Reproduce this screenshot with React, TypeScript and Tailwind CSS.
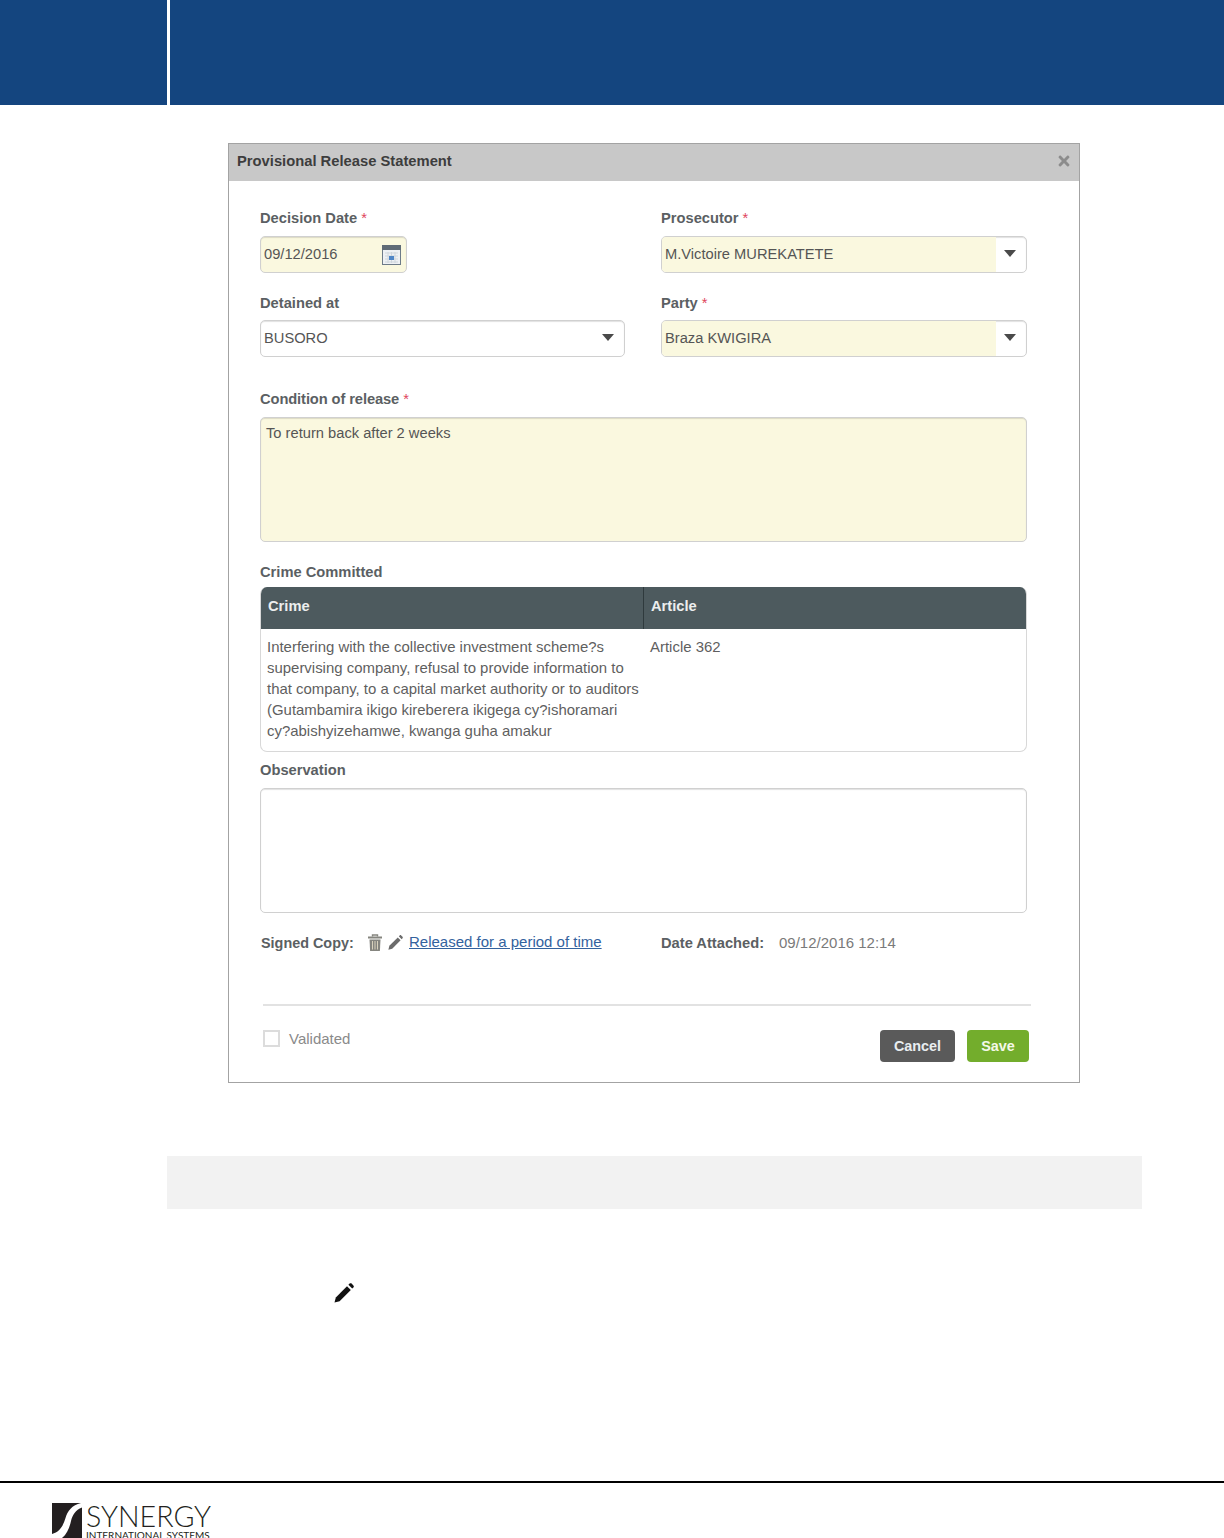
import { FaTimes } from 'react-icons/fa'
import type { ReactNode } from 'react'

const inputBorder = 'rounded-[5px] border border-[#d0d0d0] shadow-[inset_0_1px_1px_rgba(0,0,0,0.12)]'

function Label({ children, required, className }: { children: ReactNode; required?: boolean; className?: string }) {
  return (
    <div className={`h-5 text-[14.7px] leading-5 font-bold text-[#5b5f63] ${className ?? ''}`}>
      {children}
      {required && <span className="ml-1 font-normal text-[#e0455c]">*</span>}
    </div>
  )
}

function Caret() {
  return <span className="h-0 w-0 border-x-[6px] border-t-[7px] border-x-transparent border-t-[#4a4a4a]" />
}

function SelectBox({ value, highlight }: { value: string; highlight?: boolean }) {
  return (
    <div className={`flex h-[37px] overflow-hidden bg-white text-[14.7px] text-[#555] ${inputBorder}`}>
      <div className={`flex flex-1 items-center pl-[3px] ${highlight ? 'bg-[#faf8df]' : ''}`}>{value}</div>
      <div className="flex w-[30px] items-center justify-center pb-[3px] pr-[3px]">
        <Caret />
      </div>
    </div>
  )
}

function CalendarIcon() {
  return (
    <svg width="19" height="20" viewBox="0 0 19 20">
      <rect x="0.5" y="0.5" width="18" height="19" fill="#eef1f4" stroke="#6d7b88" />
      <rect x="0" y="0" width="19" height="5" fill="#5f6b76" />
      <path d="M3 8h13M3 11h13M3 14h13M3 17h13M6 7v11M9.5 7v11M13 7v11" stroke="#cfd6dc" strokeWidth="1" />
      <rect x="7" y="11" width="5" height="4" fill="#4f86c6" />
    </svg>
  )
}

function TrashIcon() {
  return (
    <svg width="14" height="17" viewBox="0 0 14 17" className="mb-[2px] shrink-0">
      <path d="M4.5 2.5V1h5v1.5" fill="none" stroke="#85857f" strokeWidth="1.4" />
      <rect x="0" y="2.5" width="14" height="2" fill="#85857f" />
      <path d="M1.5 5.5h11l-.6 11.5H2.1Z" fill="#85857f" />
      <path d="M4.5 7v8.5M7 7v8.5M9.5 7v8.5" stroke="#d9d2bd" strokeWidth="1" />
    </svg>
  )
}

// tip bottom-left, body, small gap, eraser top-right
function PencilIcon({ size, color, className }: { size: number; color: string; className?: string }) {
  return (
    <svg width={size} height={size} viewBox="0 0 20 20" className={`shrink-0 ${className ?? ''}`}>
      <path d="M0.5 19.5L1.8 14.4L13 3.2L16.8 7L5.6 18.2Z" fill={color} />
      <path d="M14.4 1.8L15.6 0.6C16.2 0 17 0 17.6 0.6L19.4 2.4C20 3 20 3.8 19.4 4.4L18.2 5.6Z" fill={color} />
    </svg>
  )
}

function SynergyLogo() {
  return (
    <div className="ml-[52px] mt-[20px] flex h-[35px] items-start overflow-hidden">
      <svg width="30" height="35" viewBox="0 0 30 35" className="shrink-0">
        <path d="M0 0H29C20 2 15.5 8 13.5 15C11.5 22 8 29 0 31Z" fill="#231f20" />
        <path d="M30 4.5C23.5 7 20.5 12 19 18C17.5 25 15 31 10 35H30Z" fill="#231f20" />
      </svg>
      <div className="ml-[4px] flex flex-col font-['Lato',sans-serif] text-[#231f20]">
        <span className="h-[26px] text-[28.6px] leading-[26px] font-light">SYNERGY</span>
        <span className="text-[10px] leading-[12px] whitespace-nowrap">INTERNATIONAL SYSTEMS</span>
      </div>
    </div>
  )
}

export default function App() {
  return (
    <div className="flex h-[1538px] w-[1224px] flex-col overflow-hidden bg-white font-['Liberation_Sans',Arial,sans-serif]">
      {/* page banner */}
      <div className="flex h-[105px] shrink-0 gap-[3px]">
        <div className="w-[167px] bg-[#14457f]" />
        <div className="flex-1 bg-[#14457f]" />
      </div>

      {/* dialog */}
      <div className="ml-[228px] mt-[38px] h-[940px] w-[852px] shrink-0 border border-[#a3a3a3] bg-white">
        <div className="flex h-[37px] items-center justify-between bg-[#c8c8c8] pl-2 pr-[7px]">
          <span className="pb-[2px] text-[14.75px] font-bold text-[#3d3d3d]">Provisional Release Statement</span>
          <FaTimes className="mb-[3px] text-[16px] text-[#8c8c8c]" />
        </div>

        <div className="px-[31px] pt-[27px]">
          <div className="w-[767px]">
            <div className="grid grid-cols-[365px_366px] gap-x-9">
              <div>
                <Label required>Decision Date</Label>
                <div className={`mt-2 flex h-[37px] w-[147px] items-center justify-between bg-[#faf8df] pl-[3px] pr-[5px] text-[14.7px] text-[#555] ${inputBorder}`}>
                  <span>09/12/2016</span>
                  <CalendarIcon />
                </div>
              </div>
              <div>
                <Label required>Prosecutor</Label>
                <div className="mt-2">
                  <SelectBox value="M.Victoire MUREKATETE" highlight />
                </div>
              </div>
              <div className="mt-5">
                <Label>Detained at</Label>
                <div className="mt-[7px]">
                  <SelectBox value="BUSORO" />
                </div>
              </div>
              <div className="mt-5">
                <Label required>Party</Label>
                <div className="mt-[7px]">
                  <SelectBox value="Braza KWIGIRA" highlight />
                </div>
              </div>
            </div>

            <Label required className="mt-8 tracking-[-0.1px]">Condition of release</Label>
            <div className={`mt-2 h-[125px] bg-[#faf8df] px-[5px] py-[5px] text-[14.7px] leading-5 text-[#555] ${inputBorder}`}>
              To return back after 2 weeks
            </div>

            <Label className="mt-5">Crime Committed</Label>
            <div className="mt-[5px] h-[165px] overflow-hidden rounded-[7px] border border-t-0 border-[#d8d8d8] text-[14.95px] text-[#5f5f5f]">
              <div className="-mx-px grid h-[42px] grid-cols-[384px_1fr] bg-[#4d5a5e] text-[14.7px] font-bold text-[#eceeee]">
                <div className="flex items-center border-r border-[#2f3a3d] pb-[3px] pl-2">Crime</div>
                <div className="flex items-center pb-[3px] pl-[7px]">Article</div>
              </div>
              <div className="grid grid-cols-[383px_1fr] pt-[7px] leading-[21px]">
                <div className="whitespace-nowrap pl-[6px]">
                  Interfering with the collective investment scheme?s
                  <br />
                  supervising company, refusal to provide information to
                  <br />
                  that company, to a capital market authority or to auditors
                  <br />
                  (Gutambamira ikigo kireberera ikigega cy?ishoramari
                  <br />
                  cy?abishyizehamwe, kwanga guha amakur
                </div>
                <div className="pl-[6px]">Article 362</div>
              </div>
            </div>

            <Label className="mt-2">Observation</Label>
            <div className={`mt-2 h-[125px] bg-white ${inputBorder}`} />

            <div className="mt-5 flex h-5 items-center text-[15px]">
              <span className="ml-px w-[107px] pt-px text-[14.4px] font-bold text-[#5b5f63]">Signed Copy:</span>
              <TrashIcon />
              <PencilIcon size={15} color="#6b6b6b" className="mb-[1px] ml-[6px]" />
              <a className="ml-[6px] w-[252px] -translate-y-px text-[#33629e] underline">Released for a period of time</a>
              <span className="w-[118px] text-[14.7px] font-bold text-[#5b5f63]">Date Attached:</span>
              <span className="text-[#7a7a7a]">09/12/2016 12:14</span>
            </div>
          </div>

          <div className="ml-[3px] mt-[51px] h-[2px] w-[768px] bg-[#e2e2e2]" />

          <div className="ml-[3px] mt-[24px] flex w-[766px] items-start justify-between">
            <div className="-mt-[3px] flex items-center text-[15px] text-[#8a8a8a]">
              <span className="h-[17px] w-[17px] border-2 border-[#dcdcdc] bg-white" />
              <span className="ml-[9px] pt-px">Validated</span>
            </div>
            <div className="flex gap-3 text-[14.4px] font-bold">
              <button className="h-8 w-[75px] rounded-[4px] bg-[#5a5a5a] pt-px text-[#e8edf0]">Cancel</button>
              <button className="h-8 w-[62px] rounded-[4px] bg-[#73ad2c] pt-px text-[#f4f8e8]">Save</button>
            </div>
          </div>
        </div>
      </div>

      {/* note band */}
      <div className="ml-[167px] mt-[73px] h-[53px] w-[975px] shrink-0 bg-[#f2f2f2]" />

      <PencilIcon size={20} color="#111" className="ml-[334px] mt-[74px]" />

      {/* footer */}
      <div className="mt-[178px] h-[2px] w-full shrink-0 bg-black" />
      <SynergyLogo />
    </div>
  )
}
